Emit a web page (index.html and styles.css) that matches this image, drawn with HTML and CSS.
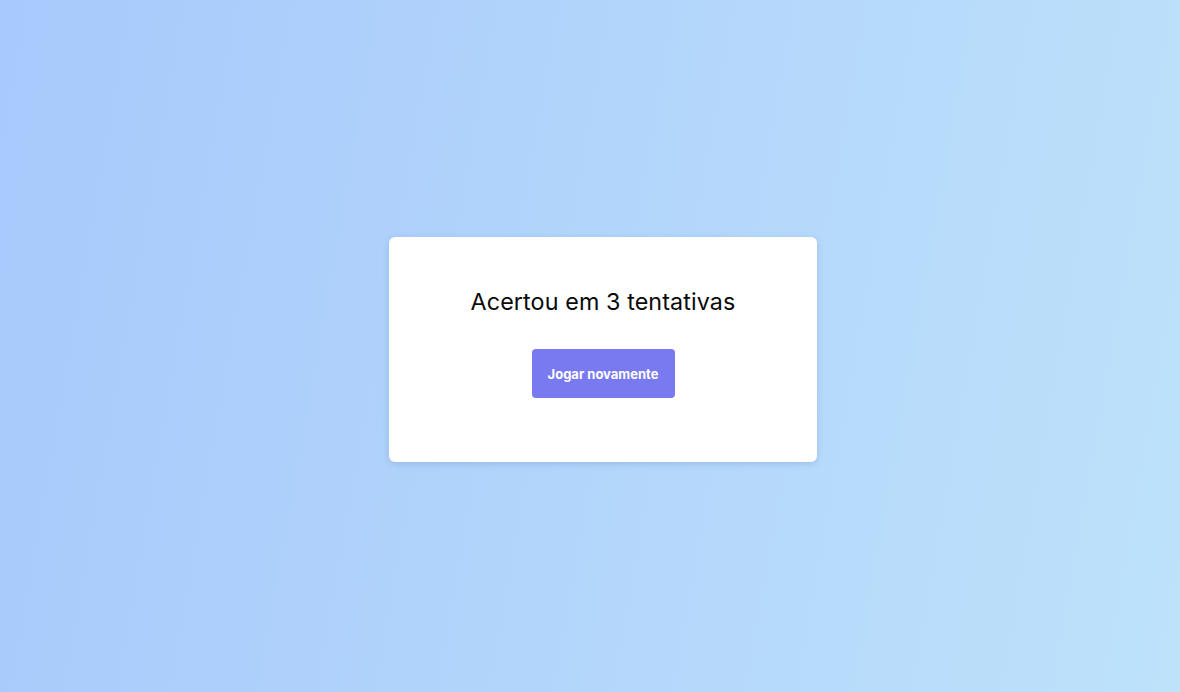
FILE: index.html
```html
<!DOCTYPE html>
<html lang="pt">
<head>
<meta charset="utf-8">
<title>Resultado</title>
<link rel="stylesheet" href="styles.css">
</head>
<body>
<main class="stage">
  <section class="card">
    <h1 class="title">Acertou em 3 tentativas</h1>
    <button class="btn" type="button">Jogar novamente</button>
  </section>
</main>
</body>
</html>
```
FILE: styles.css
```css
html, body {
  margin: 0;
  height: 100%;
}
body {
  background: linear-gradient(100deg, #a7c9fc 0%, #b1d4fb 45%, #bde2fa 100%);
  font-family: "Inter", "Open Sans", sans-serif;
}
.stage {
  height: 100%;
  display: flex;
  align-items: center;
  justify-content: center;
  padding: 7px 0 0 26px;
  box-sizing: border-box;
}
.card {
  width: 428px;
  height: 225px;
  box-sizing: border-box;
  background: #ffffff;
  border-radius: 6px;
  box-shadow: 0 2px 6px rgba(80, 120, 180, 0.25);
  padding: 50px 0 0;
  display: flex;
  flex-direction: column;
  align-items: center;
}
.title {
  margin: 0;
  font-size: 23.3px;
  line-height: 30px;
  font-weight: 400;
  color: #0a0a0a;
  letter-spacing: 0.1px;
}
.btn {
  margin-top: 32px;
  width: 143px;
  height: 49px;
  border: none;
  border-radius: 4px;
  background: #7a7af0;
  color: #ffffff;
  font-family: "Inter", "Open Sans", sans-serif;
  font-size: 13px;
  font-weight: 700;
  padding: 0;
  cursor: pointer;
}
```
